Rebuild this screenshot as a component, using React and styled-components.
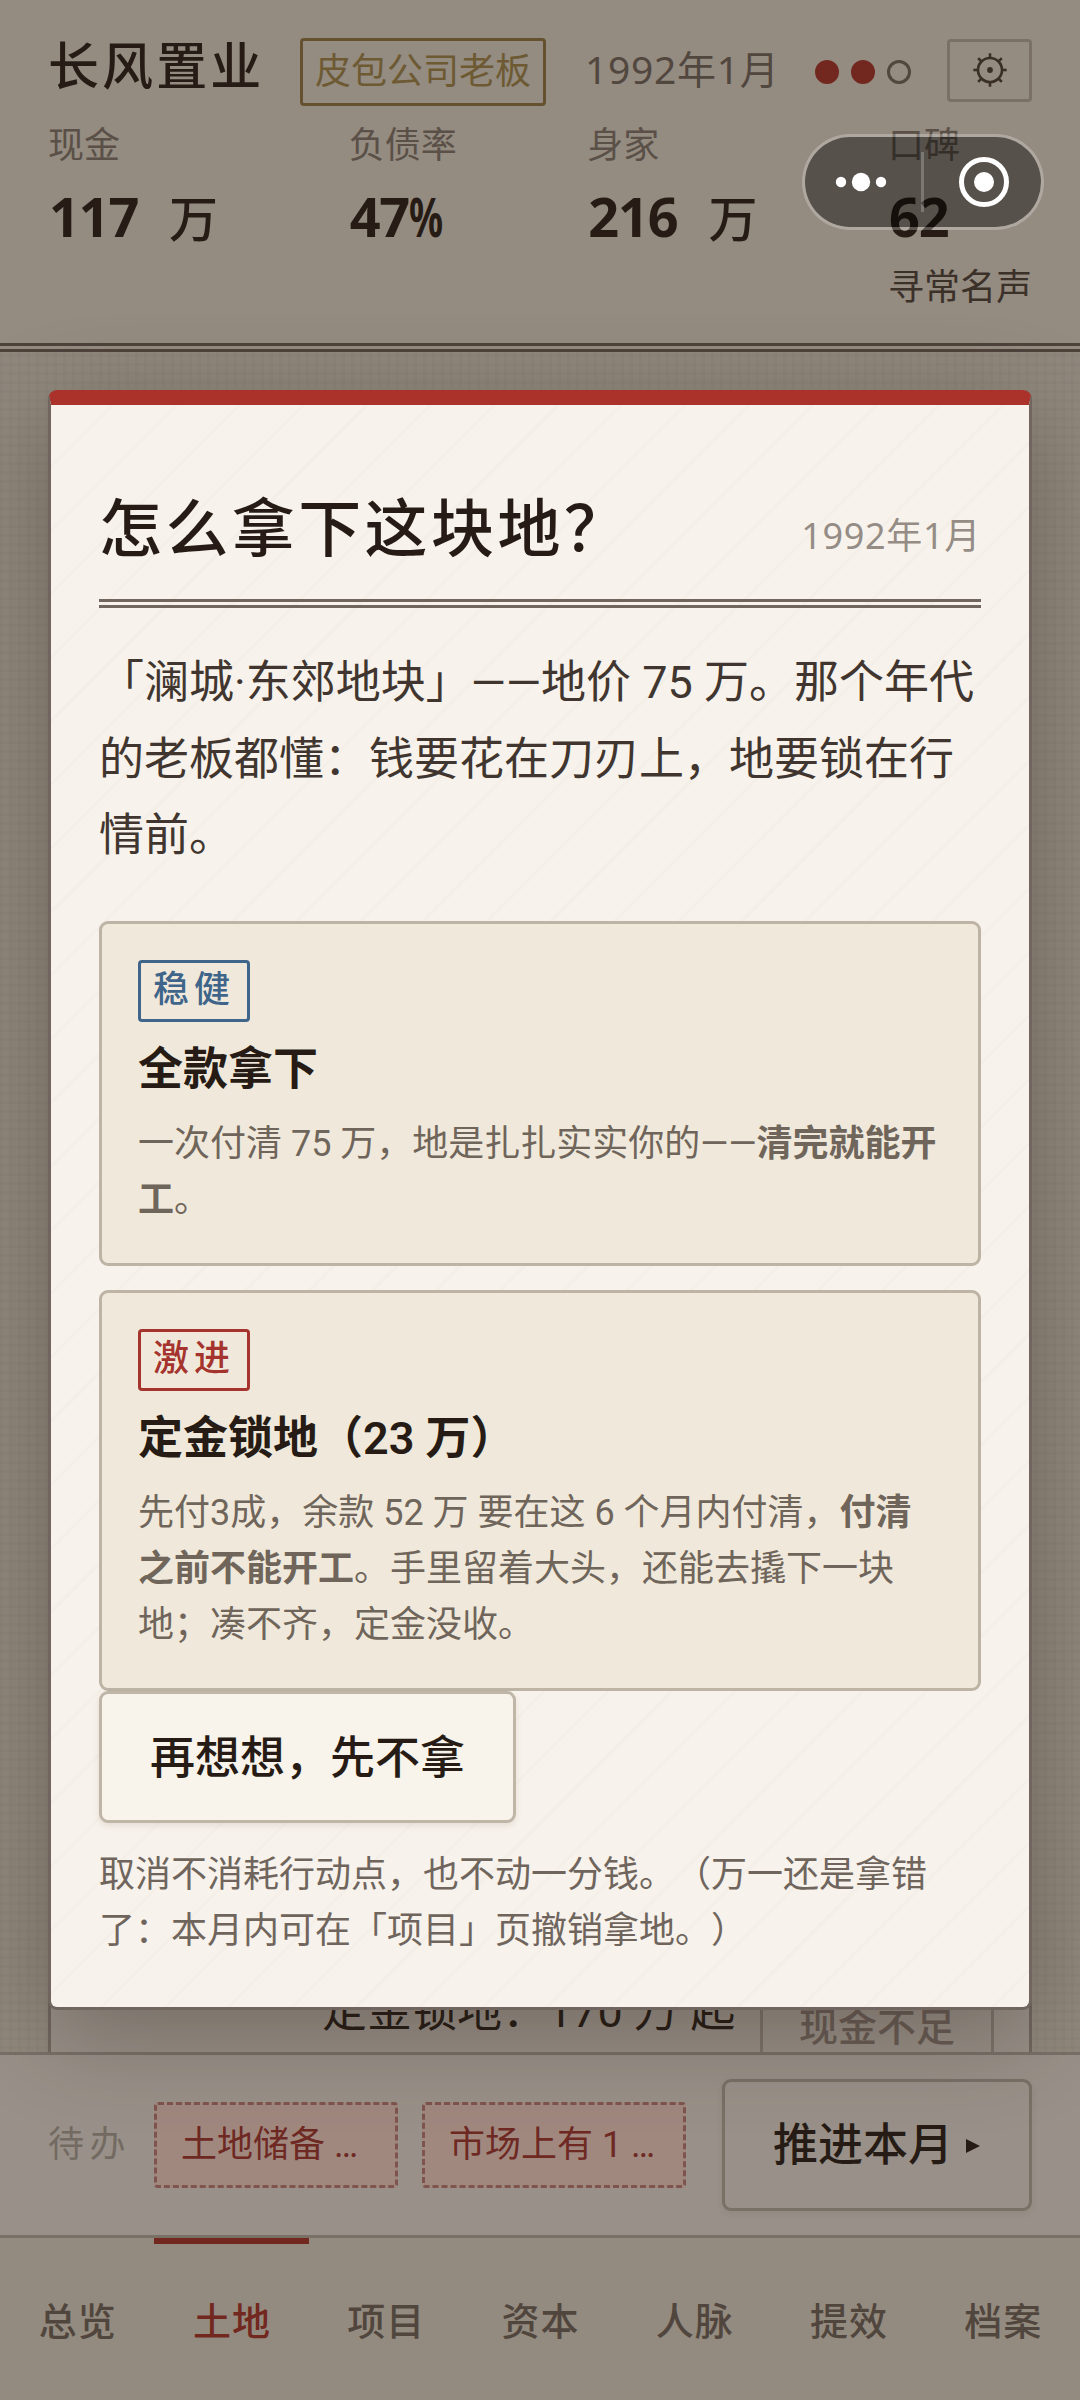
import styled, { createGlobalStyle } from "styled-components";

const GlobalStyle = createGlobalStyle`
  * {
    box-sizing: border-box;
  }

  body {
    margin: 0;
    font-family: Roboto, "Noto Sans CJK SC", sans-serif;
    text-spacing-trim: space-all;
    color: #261c15;
  }

  button {
    font-family: inherit;
    text-spacing-trim: inherit;
    margin: 0;
  }
`;

const numberFont = `"Noto Sans", "Noto Sans CJK SC", sans-serif`;

const Screen = styled.div`
  position: relative;
  display: flex;
  flex-direction: column;
  width: 1080px;
  height: 2400px;
  overflow: hidden;
  background-color: #90887d;
  background-image:
    repeating-linear-gradient(0deg, rgba(60, 50, 30, 0.03) 0 3px, transparent 3px 9px),
    repeating-linear-gradient(90deg, rgba(60, 50, 30, 0.03) 0 3px, transparent 3px 9px);
`;

const Header = styled.header`
  display: flex;
  flex-direction: column;
  height: 352px;
  padding: 38px 48px 0;
  background-color: #948b81;
  border-bottom: 9px double #4e433b;
`;

const TitleRow = styled.div`
  display: flex;
  align-items: center;
  height: 68px;
`;

const CompanyName = styled.div`
  width: 252px;
  font-size: 51px;
  font-weight: 500;
  letter-spacing: 3.1px;
  line-height: 60px;
  padding-bottom: 8px;
`;

const RankBadge = styled.div`
  height: 68px;
  padding: 0 12px;
  border: 3px solid #65512f;
  border-radius: 4px;
  color: #6d5a33;
  font-size: 36px;
  line-height: 63px;
`;

const HeaderDate = styled.div`
  width: 230px;
  margin-left: 39px;
  padding-bottom: 7px;
  font-family: ${numberFont};
  font-size: 39px;
  letter-spacing: 0.7px;
  line-height: 62px;
  white-space: nowrap;
  color: #51473e;
`;

const ActionDots = styled.div`
  display: flex;
  gap: 12px;
`;

const ActionDot = styled.span`
  width: 24px;
  height: 24px;
  border: 3px solid ${props => (props.$left ? "#72271f" : "#51473e")};
  border-radius: 50%;
  background-color: ${props => (props.$left ? "#72271f" : "transparent")};
`;

const SettingsButton = styled.button`
  display: flex;
  align-items: center;
  justify-content: center;
  width: 85px;
  height: 63px;
  margin-left: auto;
  margin-bottom: 4px;
  padding: 0;
  background: none;
  border: 3px solid #7a7066;
  border-radius: 4px;
`;

const Stats = styled.div`
  display: flex;
  justify-content: space-between;
  padding-top: 10px;
`;

const Stat = styled.div`
  display: flex;
  flex-direction: column;
  width: ${props => props.$width}px;
`;

const StatLabel = styled.div`
  font-size: 36px;
  line-height: 60px;
  color: #5a5047;
`;

const StatValue = styled.div`
  height: 82px;
  padding-left: 1px;
  font-family: ${numberFont};
  font-size: 54px;
  font-weight: 700;
  letter-spacing: -1.2px;
  line-height: 80px;
  white-space: nowrap;
`;

const StatUnit = styled.span`
  margin-left: 31px;
  font-size: 49px;
  font-weight: 500;
`;

const PercentSign = styled.span`
  display: inline-block;
  transform: scaleX(0.7);
  transform-origin: left;
`;

const StatNote = styled.div`
  font-size: 36px;
  line-height: 60px;
  color: #3c3129;
`;

const Market = styled.main`
  display: flex;
  flex-direction: column;
  justify-content: flex-end;
  height: 1700px;
  padding: 24px 48px 0;
`;

const LandCard = styled.div`
  display: flex;
  align-items: flex-end;
  height: 1600px;
  border: 3px solid #70665f;
  border-bottom: none;
  background-color: #989088;
  overflow: hidden;
`;

const LandPrice = styled.div`
  margin-left: 271px;
  width: 438px;
  font-size: 45px;
  line-height: 81px;
  white-space: nowrap;
`;

const ShortOfCash = styled.button`
  width: 234px;
  height: 66px;
  padding: 18px 0 0;
  border: 3px solid #7d736b;
  border-width: 0 3px;
  background: none;
  color: #685c55;
  font-size: 39px;
  font-weight: 500;
  line-height: 40px;
`;

const ActionBar = styled.div`
  display: flex;
  align-items: center;
  height: 183px;
  padding: 4px 48px 5px;
  border-top: 3px solid #797068;
  background-color: #999189;
`;

const TodoLabel = styled.div`
  width: 106px;
  font-size: 36px;
  letter-spacing: 5.4px;
  line-height: 60px;
  color: #736a62;
`;

const TodoChip = styled.div`
  width: ${props => props.$width}px;
  height: 86px;
  margin-right: 24px;
  padding: 0 24px;
  border: 3px dashed #7e544c;
  border-radius: 4px;
  background-color: #a0887f;
  color: #6f2923;
  font-size: 36px;
  line-height: 80px;
  white-space: nowrap;
`;

const AdvanceButton = styled.button`
  display: flex;
  align-items: center;
  width: 310px;
  height: 132px;
  margin-left: auto;
  padding: 2px 48px 0;
  background-color: #999189;
  border: 3px solid #797066;
  border-radius: 9px;
  box-shadow: 0 3px 6px rgba(50, 40, 30, 0.08);
  color: #261c15;
  font-size: 45px;
  font-weight: 500;
  line-height: 60px;
`;

const Arrow = styled.svg`
  margin: 0 0 0 13px;
`;

const TabBar = styled.nav`
  display: flex;
  height: 165px;
  border-top: 3px solid #797066;
  background-color: #948b80;
`;

const Tab = styled.a`
  flex: 1;
  padding: 48px 0 0 1px;
  border-top: 6px solid ${props => (props.$active ? "#72281f" : "transparent")};
  color: ${props => (props.$active ? "#72281f" : "#51463d")};
  font-size: 38px;
  font-weight: 500;
  letter-spacing: 1px;
  line-height: 60px;
  text-align: center;
`;

const Overlay = styled.div`
  position: absolute;
  inset: 0;
  display: flex;
  align-items: center;
  justify-content: center;
`;

const Modal = styled.section`
  display: flex;
  flex-direction: column;
  align-items: flex-start;
  width: 984px;
  height: 1620px;
  padding: 80px 48px 0;
  border: 3px solid #70665f;
  border-top: 15px solid #ab312b;
  border-radius: 9px;
  background-color: #f7f2eb;
  background-image: repeating-linear-gradient(135deg, transparent 0 42px, rgba(90, 70, 50, 0.02) 42px 45px);
  box-shadow: 0 24px 96px rgba(45, 34, 25, 0.33);
`;

const ModalHead = styled.div`
  display: flex;
  justify-content: space-between;
  width: 100%;
  height: 123px;
  border-bottom: 9px double #70665e;
`;

const ModalTitle = styled.h2`
  margin: 0;
  font-size: 63px;
  font-weight: 500;
  letter-spacing: 3.4px;
  line-height: 89px;
`;

const ModalDate = styled.div`
  padding-top: 24px;
  font-family: ${numberFont};
  font-size: 36px;
  letter-spacing: 0.7px;
  line-height: 54px;
  color: #948c85;
`;

const Intro = styled.p`
  margin: 37px 0 46px;
  font-size: 45px;
  line-height: 76.5px;
  color: #41362f;
`;

const Option = styled.div`
  width: 100%;
  margin-bottom: ${props => (props.$last ? 0 : 24)}px;
  padding: 36px 36px 35px;
  border: 3px solid #beb4a6;
  border-radius: 9px;
  background-color: #f0e9db;
`;

const OptionTag = styled.div`
  width: fit-content;
  height: 62px;
  padding: 0 12px;
  border: 3px solid;
  border-radius: 4px;
  color: ${props => props.$color};
  font-size: 36px;
  font-weight: 500;
  letter-spacing: 5px;
  line-height: 55px;
`;

const OptionTitle = styled.div`
  margin-top: 16px;
  font-size: 45px;
  font-weight: 600;
  line-height: 63px;
`;

const OptionText = styled.div`
  margin-top: 15px;
  font-size: 36px;
  line-height: 56px;
  color: #6f655a;

  b {
    font-weight: 600;
  }
`;

const CancelButton = styled.button`
  width: 417px;
  height: 132px;
  padding: 0 0 4px;
  border: 3px solid #c0b6a8;
  border-radius: 9px;
  background-color: #f8f3eb;
  box-shadow: 0 3px 6px rgba(80, 60, 40, 0.1);
  color: #261c15;
  font-size: 45px;
  font-weight: 500;
`;

const Hint = styled.p`
  margin: 24px 0 0;
  font-size: 36px;
  line-height: 56px;
  color: #6f655d;
`;

const Capsule = styled.div`
  position: absolute;
  top: 134px;
  right: 36px;
  width: 242px;
  height: 96px;
  border: 3px solid rgba(255, 255, 255, 0.25);
  border-radius: 48px;
  background-color: rgba(0, 0, 0, 0.41);
  background-clip: padding-box;
`;

const stats = [
  { label: "现金", value: "117", unit: "万", width: 170 },
  { label: "负债率", value: "47", percent: true, width: 108 },
  { label: "身家", value: "216", unit: "万", width: 170 },
  { label: "口碑", value: "62", note: "寻常名声", width: 144 },
];

const tabs = ["总览", "土地", "项目", "资本", "人脉", "提效", "档案"];

const Gear = () => (
  <svg width="36" height="36" viewBox="-18 -18 36 36" fill="none" stroke="#3a2f27">
    <circle r="12" strokeWidth="2.6" />
    <circle r="2.9" fill="#3a2f27" stroke="none" />
    {[0, 45, 90, 135, 180, 225, 270, 315].map(angle => (
      <path key={angle} d="M0 -12V-16.7" strokeWidth="2.6" transform={`rotate(${angle})`} />
    ))}
  </svg>
);

const App = () => {
  return (
    <Screen>
      <GlobalStyle />

      <Header>
        <TitleRow>
          <CompanyName>长风置业</CompanyName>
          <RankBadge>皮包公司老板</RankBadge>
          <HeaderDate>1992年1月</HeaderDate>
          <ActionDots>
            <ActionDot $left />
            <ActionDot $left />
            <ActionDot />
          </ActionDots>
          <SettingsButton><Gear /></SettingsButton>
        </TitleRow>
        <Stats>
          {stats.map(stat => (
            <Stat key={stat.label} $width={stat.width}>
              <StatLabel>{stat.label}</StatLabel>
              <StatValue>
                {stat.value}
                {stat.percent && <PercentSign>%</PercentSign>}
                {stat.unit && <StatUnit>{stat.unit}</StatUnit>}
              </StatValue>
              {stat.note && <StatNote>{stat.note}</StatNote>}
            </Stat>
          ))}
        </Stats>
      </Header>

      <Market>
        <LandCard>
          <LandPrice>定金锁地：170 万 起</LandPrice>
          <ShortOfCash>现金不足</ShortOfCash>
        </LandCard>
      </Market>

      <ActionBar>
        <TodoLabel>待办</TodoLabel>
        <TodoChip $width={244}>土地储备 …</TodoChip>
        <TodoChip $width={264}>市场上有 1 …</TodoChip>
        <AdvanceButton>
          推进本月
          <Arrow width="14" height="14" viewBox="0 0 14 14">
            <path d="M0 0L14 7L0 14Z" fill="#261c15" />
          </Arrow>
        </AdvanceButton>
      </ActionBar>

      <TabBar>
        {tabs.map(tab => (
          <Tab key={tab} $active={tab === "土地"}>{tab}</Tab>
        ))}
      </TabBar>

      <Overlay>
        <Modal>
          <ModalHead>
            <ModalTitle>怎么拿下这块地？</ModalTitle>
            <ModalDate>1992年1月</ModalDate>
          </ModalHead>
          <Intro>
            「澜城·东郊地块」——地价 75 万。那个年代的老板都懂：钱要花在刀刃上，地要锁在行情前。
          </Intro>
          <Option>
            <OptionTag $color="#3f658a">稳健</OptionTag>
            <OptionTitle>全款拿下</OptionTitle>
            <OptionText>
              一次付清 75 万，地是扎扎实实你的——<b>清完就能开工</b>。
            </OptionText>
          </Option>
          <Option $last>
            <OptionTag $color="#a4342d">激进</OptionTag>
            <OptionTitle>定金锁地（23 万）</OptionTitle>
            <OptionText>
              先付3成，余款 52 万 要在这 6 个月内付清，<b>付清之前不能开工</b>。手里留着大头，还能去撬下一块地；凑不齐，定金没收。
            </OptionText>
          </Option>
          <CancelButton>再想想，先不拿</CancelButton>
          <Hint>
            取消不消耗行动点，也不动一分钱。（万一还是拿错了：本月内可在「项目」页撤销拿地。）
          </Hint>
        </Modal>
      </Overlay>

      <Capsule>
        <svg width="236" height="90" viewBox="0 0 236 90" fill="#fff">
          <circle cx="36" cy="45" r="5.2" />
          <circle cx="56" cy="45" r="9.2" />
          <circle cx="76" cy="45" r="5.2" />
          <path d="M117.5 15V75" stroke="#fff" strokeOpacity="0.22" strokeWidth="3" />
          <circle cx="179" cy="45" r="22.5" fill="none" stroke="#fff" strokeWidth="5" />
          <circle cx="179" cy="45" r="10" />
        </svg>
      </Capsule>
    </Screen>
  );
};

export default App;
